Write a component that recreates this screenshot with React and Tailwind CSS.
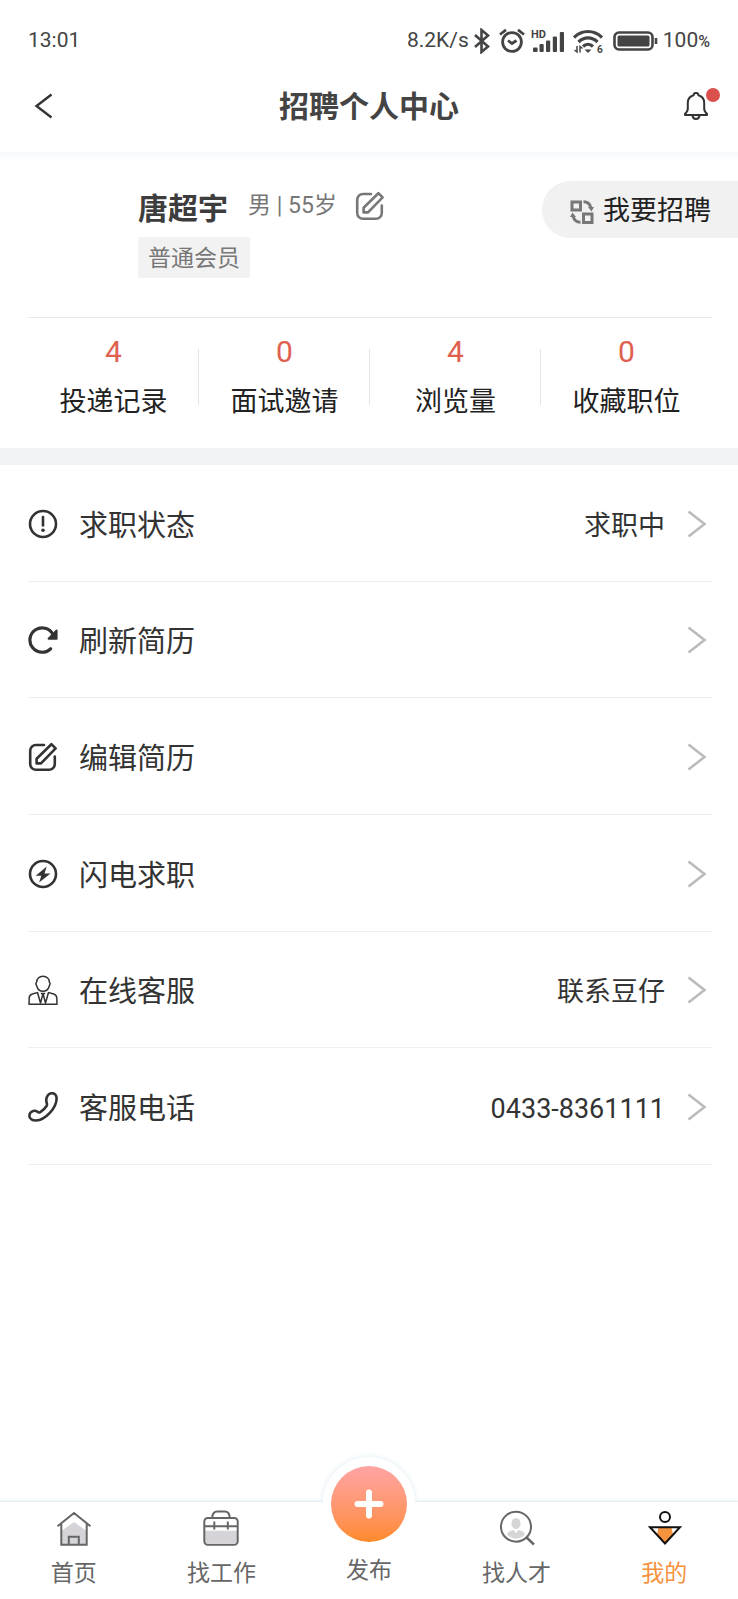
const stats = [
    { label: '投递记录', count: 4 },
    { label: '面试邀请', count: 0 },
    { label: '浏览量', count: 4 },
    { label: '收藏职位', count: 0 },
];

const menu = [
    { label: '求职状态', value: '求职中', Icon: StatusIcon },
    { label: '刷新简历', Icon: RefreshIcon },
    { label: '编辑简历', Icon: EditIcon },
    { label: '闪电求职', Icon: BoltIcon },
    { label: '在线客服', value: '联系豆仔', Icon: AgentIcon },
    { label: '客服电话', value: '0433-8361111', Icon: PhoneIcon },
];

function StatusIcon() {
    return (
        <svg viewBox="0 0 30 30" fill="none" stroke="currentColor" className="size-[30px] shrink-0">
            <circle cx="15" cy="15" r="13" strokeWidth="2.6"/>
            <path d="M15 8v8.5" strokeWidth="2.6" strokeLinecap="round"/>
            <circle cx="15" cy="21.3" r="1.8" fill="currentColor" stroke="none"/>
        </svg>
    );
}

function RefreshIcon() {
    return (
        <svg viewBox="0 0 30 30" fill="none" stroke="currentColor" className="size-[30px] shrink-0">
            <path d="M25 9.5A12.2 12.2 0 1 0 22.6 23.8" strokeWidth="3.2" strokeLinecap="round"/>
            <path d="M28.6 5.5v8.2h-8z" fill="currentColor" strokeWidth="2" strokeLinejoin="round"/>
        </svg>
    );
}

function EditIcon() {
    return (
        <svg viewBox="0 0 30 30" fill="none" stroke="currentColor" strokeWidth="2.6" strokeLinecap="round" strokeLinejoin="round" className="size-[30px] shrink-0">
            <path d="M16 3H8a5.800 5.800 0 0 0-5.800 5.800V22A5.800 5.800 0 0 0 8 27.800h13a5.800 5.800 0 0 0 5.800-5.800v-7.500"/>
            <path d="M8.600 21.400v-4.600L23.400 2.200l4.200 4.200-14.600 15z"/>
        </svg>
    );
}

function BoltIcon() {
    return (
        <svg viewBox="0 0 30 30" fill="none" stroke="currentColor" className="size-[30px] shrink-0">
            <circle cx="15" cy="15" r="13" strokeWidth="2.6"/>
            <path d="M18.7 7.5 7.700 16.700h5.600l-2.200 6.800 11.400-9h-6z" fill="currentColor" stroke="none"/>
        </svg>
    );
}

function AgentIcon() {
    return (
        <svg viewBox="0 0 30 30" fill="none" stroke="currentColor" strokeWidth="1.5" strokeLinejoin="round" className="size-[30px] shrink-0">
            <path d="M15 1.200c4 0 6.300 2.800 6.300 5.800l.9 1.600-1 2.600c-.9 3.200-3.400 5-6.200 5s-5.300-1.800-6.200-5l-1-2.600.9-1.600c0-3 2.300-5.800 6.300-5.800z"/>
            <path d="M10 17.400 4.300 19c-2 .6-3 2-3.100 4L1 29.200h28l-.2-6.200c-.1-2-1.100-3.400-3.100-4L20 17.400"/>
            <path d="M9.500 17.500l3 10.500L15 18.500l2.500 9.500 3-10.500M12.800 18.500h4.400"/>
        </svg>
    );
}

function PhoneIcon() {
    return (
        <svg viewBox="0 0 30 30" fill="none" stroke="currentColor" strokeWidth="2.6" strokeLinejoin="round" className="size-[30px] shrink-0">
            <path d="M19.300 4.200c1-2 2.700-3 4.500-3 2.900 0 4.800 2.200 4.800 5.300 0 9.300-11.300 22-20.600 22-4 0-6.600-1.900-6.600-4.600 0-2.200 1.600-4.200 3.900-4.900 1.600-.5 3-.1 4.200.8.900.8 1.800.9 2.800.3 2.600-1.500 4.700-3.600 6.300-6.100.6-1 .5-1.900.1-2.900-.7-2.400-.4-5.100.6-6.900z"/>
        </svg>
    );
}

function SwapIcon() {
    return (
        <svg viewBox="0 0 24 24" fill="none" stroke="currentColor" strokeWidth="3" className="size-6 text-[#777]">
            <path d="M2 2h8.500v8H2zM13.500 14H22v8.500h-8.500z"/>
            <path d="M13.500 1.800c3.700 0 6.300 1.800 7.300 5.700M10.500 22.200c-3.700 0-6.300-1.800-7.300-5.700"/>
            <path d="M18 7h6l-2.500 4.600zM0 17l2.500-4.600L6 17z" fill="currentColor" stroke="none"/>
        </svg>
    );
}

function StatusBar() {
    return (
        <div className="flex h-[72px] items-center justify-between px-7 pt-2.5 text-[21px] text-[#444]">
            <span>13:01</span>
            <div className="flex items-center">
                <span>8.2K/s</span>
                <svg viewBox="0 0 18 26" fill="none" stroke="currentColor" strokeWidth="2.6" className="ml-1 h-[26px] w-[18px]">
                    <path d="M2 7l13 11.500-6.500 5.500V2L15 7.500 2 19"/>
                </svg>
                <svg viewBox="0 0 26 26" fill="none" stroke="currentColor" strokeWidth="2.8" className="ml-2 size-[26px]">
                    <circle cx="13" cy="14" r="9.400"/>
                    <path d="M9 12.500l4 3 4.500-3M1 6.500 7 1.800M25 6.500l-6-4.700"/>
                </svg>
                <svg viewBox="0 0 34 26" fill="currentColor" className="ml-1.5 h-[26px] w-[34px]">
                    <text x="0" y="10" className="text-[11px] font-bold">HD</text>
                    <rect x="2" y="19.500" width="4.600" height="4.500" rx="1"/>
                    <rect x="8.500" y="16" width="4.200" height="8" rx="1"/>
                    <rect x="15" y="12.500" width="4.200" height="11.500" rx="1"/>
                    <rect x="21.800" y="8.500" width="4.200" height="15.500" rx="1"/>
                    <rect x="28.800" y="4" width="4.200" height="20" rx="1"/>
                </svg>
                <svg viewBox="0 0 30 26" fill="none" stroke="currentColor" strokeWidth="3.2" className="ml-2 h-[26px] w-[30px]">
                    <path d="M1 9.500C9 1.500 21 1.500 29 9.500M5.500 14c5.500-5.500 13.500-5.500 19 0M10 18.500c3-3 7-3 10 0"/>
                    <path d="M11.500 21.500h7L15 25z" fill="currentColor" stroke="none"/>
                    <path d="M4 18v6l-2.500-2M7 24.500v-6l2.500 2" strokeWidth="1.500"/>
                    <text x="24" y="25" fill="currentColor" stroke="none" className="text-[10px] font-bold">6</text>
                </svg>
                <svg viewBox="0 0 46 20" fill="none" stroke="currentColor" className="ml-2.5 h-5 w-[46px]">
                    <rect x="1.500" y="1.500" width="38" height="17" rx="4.500" strokeWidth="2.600"/>
                    <rect x="4.500" y="4.500" width="32" height="11" rx="1.500" fill="currentColor" stroke="none"/>
                    <path d="M43 7v6" strokeWidth="2.600"/>
                </svg>
                <span className="ml-1">100<span className="text-base font-medium">%</span></span>
            </div>
        </div>
    );
}

function Header() {
    return (
        <header className="grid h-20 grid-cols-[1fr_auto_1fr] items-center px-7 pb-3">
            <button type="button" aria-label="返回" className="justify-self-start pl-1.5">
                <svg viewBox="0 0 20 28" fill="none" stroke="#333" strokeWidth="2.4" className="h-7 w-5">
                    <path d="M17.500 2.500 2.500 14l15 11.500"/>
                </svg>
            </button>
            <h1 className="pt-0.5 text-[30px] leading-10 font-bold text-[#444]">招聘个人中心</h1>
            <button type="button" aria-label="消息" className="relative justify-self-end pr-0.5">
                <svg viewBox="0 0 24 28" fill="none" stroke="#333" strokeWidth="2" strokeLinejoin="round" className="h-7 w-6">
                    <path d="M9.600 3.300a2.400 2.400 0 0 1 4.800 0c3.600 1 5.800 4 5.800 7.700v5.500c0 2.300.8 3.800 2.800 5.300v1.200H1v-1.200c2-1.500 2.800-3 2.800-5.300V11c0-3.700 2.200-6.700 5.800-7.700z"/>
                    <path d="M8.500 23.500c.3 2.200 1.700 3.400 3.500 3.400s3.200-1.200 3.500-3.400"/>
                </svg>
                <span className="absolute -top-1 -right-2.5 size-3.5 rounded-full bg-[#d9504c]"/>
            </button>
        </header>
    );
}

function Profile() {
    return (
        <section className="flex items-start justify-between pt-[21px] pb-[39px]">
            <div className="pt-2 pl-[138px]">
                <div className="flex h-[38px] items-center">
                    <h2 className="pt-0.5 text-[30px] leading-[38px] font-bold text-[#3d3d3d]">唐超宇</h2>
                    <span className="ml-5 pb-1 text-[23px] leading-8 text-[#777]">男 | 55岁</span>
                    <button type="button" aria-label="编辑资料" className="ml-[18px] pb-1 text-[#777]">
                        <EditIcon/>
                    </button>
                </div>
                <span className="mt-2.5 inline-block rounded-xs bg-[#f2f2f2] px-2.5 pt-0.5 text-[23px] leading-[39px] text-[#777]">普通会员</span>
            </div>
            <button type="button" className="flex h-[57px] items-center gap-[9px] rounded-l-full bg-[#f1f1f1] pt-1 pr-[27px] pl-7 text-[27px] text-[#222]">
                <SwapIcon/>
                我要招聘
            </button>
        </section>
    );
}

function Stats() {
    return (
        <section className="mr-[26px] ml-7 flex border-t border-[#e8e8e8] pt-4 pb-7">
            {stats.map((item, i) => (
                <a key={item.label} href="#" className="flex flex-1 items-center">
                    <span className="flex-1 text-center">
                        <span className="block text-[30px] leading-9 text-[#e0604f]">{item.count}</span>
                        <span className="mt-3.5 block text-[27px] leading-9 text-[#222]">{item.label}</span>
                    </span>
                    {i < stats.length - 1 && <span className="-ml-px h-14 w-px bg-[#e4e4ea]"/>}
                </a>
            ))}
        </section>
    );
}

function Menu() {
    return (
        <ul className="mr-[26px] ml-7 grid h-[700px] grid-rows-6">
            {menu.map(({ label, value, Icon }) => (
                <li key={label} className="border-b border-[#eee]">
                    <a href="#" className="flex h-full items-center pt-0.5 text-[#333]">
                        <Icon/>
                        <span className="ml-[21px] pt-1 text-[29px] leading-10">{label}</span>
                        <span className="ml-auto pt-1 text-[27px] leading-10">{value}</span>
                        <svg viewBox="0 0 20 28" fill="none" stroke="#bbb" strokeWidth="2.600" className="mr-[5px] ml-[22px] h-7 w-5">
                            <path d="M1.500 1.500 17.500 14l-16 12.500"/>
                        </svg>
                    </a>
                </li>
            ))}
        </ul>
    );
}

function NavItem({ label, active, children }) {
    return (
        <a href="#" className="flex flex-1 flex-col items-center">
            <svg viewBox="0 0 36 36" fill="none" stroke="#666" strokeWidth="2" className="size-9">
                {children}
            </svg>
            <span className={`mt-3 text-[23px] leading-8 ${active ? 'text-[#f5923e]' : 'text-[#666]'}`}>{label}</span>
        </a>
    );
}

function BottomNav() {
    return (
        <div className="relative isolate mt-auto">
            {/* halo behind the publish button, hidden by the bar below its top edge */}
            <div className="absolute -top-11 left-1/2 size-[92px] -translate-x-1/2 rounded-full bg-white shadow-[0_0_5px_1px_#e6f1f7]"/>
            <nav className="relative flex border-t border-[#e3eef3] bg-white pt-2 pb-[9px] shadow-[0_-1px_4px_#edf5f9]">
                <NavItem label="首页">
                    <path d="M18 12 30 20.500V34H6V20.500z" fill="#d6d4d8" stroke="none"/>
                    <path d="M1.500 16.300 18 3l16.500 13.300M5.300 13.500v21.200h25.400V13.500M12.800 34.500v-7.700h10v7.700"/>
                </NavItem>
                <NavItem label="找工作">
                    <path d="M2 20.700h32V33H2z" fill="#d6d4d8" stroke="none"/>
                    <rect x="1.300" y="8" width="33.400" height="26.700" rx="3.500"/>
                    <path d="M9.300 8c0-4 1.500-6.500 5-6.500h7.400c3.500 0 5 2.500 5 6.500M1.300 16.200h33.400M11.300 11.500v8M24.800 11.500v8"/>
                </NavItem>
                <a href="#" className="flex flex-1 flex-col items-center">
                    <span className="-mt-11 flex size-[76px] items-center justify-center rounded-full bg-linear-to-b from-[#ffa4a4] to-[#ff8a28] ring-8 ring-white">
                        <svg viewBox="0 0 30 30" stroke="#fff" strokeWidth="6" strokeLinecap="round" className="size-[30px]">
                            <path d="M15 3.500v23M3.500 15h23"/>
                        </svg>
                    </span>
                    <span className="mt-[13px] text-[23px] leading-8 text-[#666]">发布</span>
                </a>
                <NavItem label="找人才">
                    <ellipse cx="17" cy="13.500" rx="4.500" ry="5.500" fill="#d6d6d6" stroke="none"/>
                    <path d="M8 24.500c1-3 4-4 6.500-4.500l2.500 3 2.500-3c2.500.5 5.500 1.500 6.500 4.500-5 5.500-13 5.500-18 0z" fill="#d6d6d6" stroke="none"/>
                    <circle cx="17" cy="16.700" r="15"/>
                    <path d="M27.500 27.500l7.500 7" strokeWidth="2.400"/>
                </NavItem>
                <NavItem label="我的" active>
                    <path d="M12.500 17.500h13l1.500 7-8 8.500-8-8.500z" fill="#f5923e" stroke="none"/>
                    <circle cx="19" cy="7" r="5" stroke="#111"/>
                    <path d="M4 17.300h30L19 33.500z" stroke="#111"/>
                </NavItem>
            </nav>
        </div>
    );
}

export default function App() {
    return (
        <div className="flex min-h-screen flex-col bg-white font-['Roboto','Noto_Sans_CJK_SC',sans-serif]">
            <StatusBar/>
            <Header/>
            <div className="h-2 bg-linear-to-b from-[#f5f9fb] to-white"/>
            <Profile/>
            <Stats/>
            <div className="h-[17px] bg-[#f0f4f5]"/>
            <Menu/>
            <BottomNav/>
        </div>
    );
}
